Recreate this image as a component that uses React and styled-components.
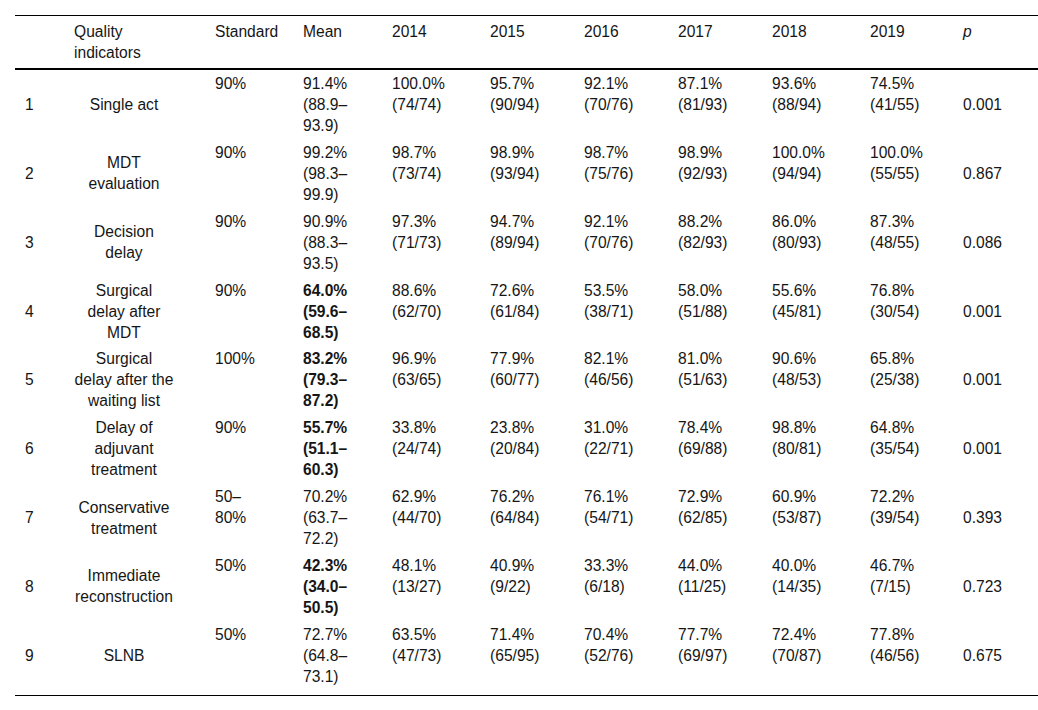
import styled, { createGlobalStyle } from "styled-components";

const GlobalStyle = createGlobalStyle`
  body {
    margin: 0;
    background: #fff;
    font-family: "Liberation Sans", Arial, sans-serif;
    color: #161616;
  }
`;

const Page = styled.div`
  padding: 15px 0 0 15px;
  overflow: hidden;
`;

const Table = styled.table`
  width: 1023px;
  table-layout: fixed;
  border-collapse: collapse;
  font-size: 15.6px;
  line-height: 21px;
  border-top: 1px solid #000;
  border-bottom: 1px solid #000;
`;

const Head = styled.thead`
  border-bottom: 2px solid #000;
`;

const HeadCell = styled.th`
  font-weight: normal;
  text-align: left;
  vertical-align: top;
  padding: 5px 0 5px 12px;
  font-style: ${(p) => (p.$italic ? "italic" : "normal")};
`;

const Row = styled.tr`
  &:last-child td {
    padding-bottom: 8px;
  }
`;

const Cell = styled.td`
  padding: 3px 0 2.85px 12px;
  white-space: nowrap;
  text-align: ${(p) => (p.$center ? "center" : "left")};
  vertical-align: ${(p) => (p.$middle ? "middle" : "top")};
  font-weight: ${(p) => (p.$bold ? "bold" : "normal")};
  ${(p) => p.$center && "padding-right: 29px;"}
`;

const IndexCell = styled(Cell)`
  padding-left: 10px;
`;

const Line = styled.span`
  display: block;
`;

const widths = [47, 141, 88, 89, 98, 94, 94, 94, 98, 93, 87];
const years = ["2014", "2015", "2016", "2017", "2018", "2019"];

const rows = [
  {
    name: ["Single act"], std: ["90%"], mean: ["91.4%", "(88.9–", "93.9)"], p: "0.001",
    years: [["100.0%", "74/74"], ["95.7%", "90/94"], ["92.1%", "70/76"], ["87.1%", "81/93"], ["93.6%", "88/94"], ["74.5%", "41/55"]],
  },
  {
    name: ["MDT", "evaluation"], std: ["90%"], mean: ["99.2%", "(98.3–", "99.9)"], p: "0.867",
    years: [["98.7%", "73/74"], ["98.9%", "93/94"], ["98.7%", "75/76"], ["98.9%", "92/93"], ["100.0%", "94/94"], ["100.0%", "55/55"]],
  },
  {
    name: ["Decision", "delay"], std: ["90%"], mean: ["90.9%", "(88.3–", "93.5)"], p: "0.086",
    years: [["97.3%", "71/73"], ["94.7%", "89/94"], ["92.1%", "70/76"], ["88.2%", "82/93"], ["86.0%", "80/93"], ["87.3%", "48/55"]],
  },
  {
    name: ["Surgical", "delay after", "MDT"], std: ["90%"], mean: ["64.0%", "(59.6–", "68.5)"], bold: true, p: "0.001",
    years: [["88.6%", "62/70"], ["72.6%", "61/84"], ["53.5%", "38/71"], ["58.0%", "51/88"], ["55.6%", "45/81"], ["76.8%", "30/54"]],
  },
  {
    name: ["Surgical", "delay after the", "waiting list"], std: ["100%"], mean: ["83.2%", "(79.3–", "87.2)"], bold: true, p: "0.001",
    years: [["96.9%", "63/65"], ["77.9%", "60/77"], ["82.1%", "46/56"], ["81.0%", "51/63"], ["90.6%", "48/53"], ["65.8%", "25/38"]],
  },
  {
    name: ["Delay of", "adjuvant", "treatment"], std: ["90%"], mean: ["55.7%", "(51.1–", "60.3)"], bold: true, p: "0.001",
    years: [["33.8%", "24/74"], ["23.8%", "20/84"], ["31.0%", "22/71"], ["78.4%", "69/88"], ["98.8%", "80/81"], ["64.8%", "35/54"]],
  },
  {
    name: ["Conservative", "treatment"], std: ["50–", "80%"], mean: ["70.2%", "(63.7–", "72.2)"], p: "0.393",
    years: [["62.9%", "44/70"], ["76.2%", "64/84"], ["76.1%", "54/71"], ["72.9%", "62/85"], ["60.9%", "53/87"], ["72.2%", "39/54"]],
  },
  {
    name: ["Immediate", "reconstruction"], std: ["50%"], mean: ["42.3%", "(34.0–", "50.5)"], bold: true, p: "0.723",
    years: [["48.1%", "13/27"], ["40.9%", "9/22"], ["33.3%", "6/18"], ["44.0%", "11/25"], ["40.0%", "14/35"], ["46.7%", "7/15"]],
  },
  {
    name: ["SLNB"], std: ["50%"], mean: ["72.7%", "(64.8–", "73.1)"], p: "0.675",
    years: [["63.5%", "47/73"], ["71.4%", "65/95"], ["70.4%", "52/76"], ["77.7%", "69/97"], ["72.4%", "70/87"], ["77.8%", "46/56"]],
  },
];

const Lines = ({ items }) => items.map((t, i) => <Line key={i}>{t}</Line>);

const App = () => {
  return (
    <Page>
      <GlobalStyle />
      <Table>
        <colgroup>
          {widths.map((w, i) => (
            <col key={i} style={{ width: w }} />
          ))}
        </colgroup>
        <Head>
          <tr>
            <HeadCell />
            <HeadCell>
              <Line>Quality</Line>
              <Line>indicators</Line>
            </HeadCell>
            <HeadCell>Standard</HeadCell>
            <HeadCell>Mean</HeadCell>
            {years.map((y) => (
              <HeadCell key={y}>{y}</HeadCell>
            ))}
            <HeadCell $italic>p</HeadCell>
          </tr>
        </Head>
        <tbody>
          {rows.map((r, i) => (
            <Row key={i}>
              <IndexCell $middle>{i + 1}</IndexCell>
              <Cell $middle $center>
                <Lines items={r.name} />
              </Cell>
              <Cell>
                <Lines items={r.std} />
              </Cell>
              <Cell $bold={r.bold}>
                <Lines items={r.mean} />
              </Cell>
              {r.years.map(([pct, n], j) => (
                <Cell key={j}>
                  <Line>{pct}</Line>
                  <Line>({n})</Line>
                </Cell>
              ))}
              <Cell $middle>{r.p}</Cell>
            </Row>
          ))}
        </tbody>
      </Table>
    </Page>
  );
};

export default App;
